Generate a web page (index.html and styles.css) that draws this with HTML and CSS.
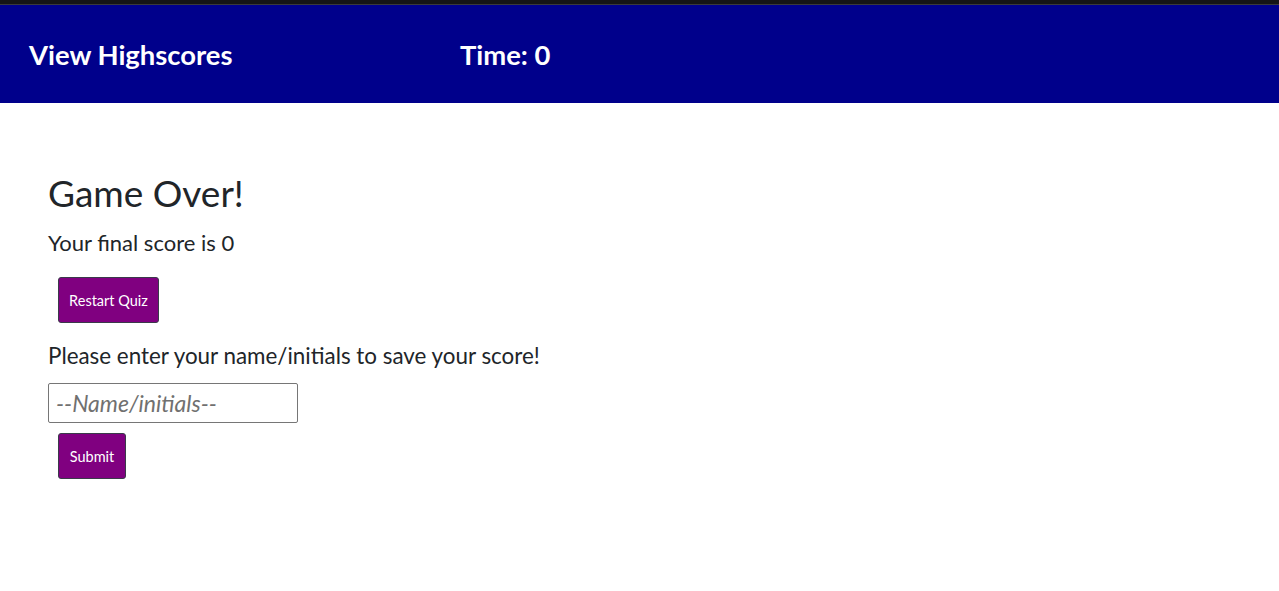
FILE: index.html
```html
<!DOCTYPE html>
<html lang="en">
<head>
<meta charset="utf-8">
<title>Quiz</title>
<link rel="stylesheet" href="styles.css">
</head>
<body>
<div class="topstrip"></div>
<header class="header">
  <a class="nav-link" href="#">View Highscores</a>
  <span class="timer">Time: 0</span>
</header>
<main class="content">
  <h1 class="title">Game Over!</h1>
  <p class="score">Your final score is 0</p>
  <button class="btn btn-restart">Restart Quiz</button>
  <p class="prompt">Please enter your name/initials to save your score!</p>
  <input class="name-input" type="text" placeholder="--Name/initials--">
  <button class="btn btn-submit">Submit</button>
</main>
</body>
</html>
```
FILE: styles.css
```css
html, body {
  margin: 0;
  padding: 0;
  background: #ffffff;
  font-family: Lato, "Open Sans", sans-serif;
  color: #212529;
}
.topstrip {
  height: 4px;
  background: #151515;
  border-bottom: 1px solid #3a3a3a;
}
.header {
  display: grid;
  grid-template-columns: 431px auto;
  align-items: center;
  height: 98px;
  padding-left: 29px;
  background: #00008b;
}
.nav-link, .timer {
  color: #ffffff;
  font-weight: 700;
  font-size: 27.4px;
  text-decoration: none;
}
.content {
  padding: 66px 48px 0;
  display: flex;
  flex-direction: column;
  align-items: flex-start;
}
.title {
  margin: 0;
  font-weight: 400;
  font-size: 37px;
  line-height: 48px;
}
.score, .prompt {
  margin: 0;
  font-size: 22px;
  line-height: 30px;
}
.score { margin-top: 11px; }
.prompt { margin-top: 18px; font-size: 22.4px; }
.btn {
  margin-left: 10px;
  background: #800080;
  color: #ffffff;
  border: 1px solid #3a3a4a;
  border-radius: 3px;
  font-family: Lato, "Open Sans", sans-serif;
  font-size: 14.5px;
  height: 46px;
  padding: 0 8px;
}
.btn-restart { margin-top: 19px; width: 101px; }
.btn-submit { margin-top: 10px; width: 68px; }
.name-input {
  margin-top: 12px;
  box-sizing: border-box;
  width: 250px;
  height: 40px;
  border: 1px solid #767676;
  border-radius: 2px;
  padding: 0 7px;
  font-family: Lato, "Open Sans", sans-serif;
  font-size: 23px;
  font-style: italic;
}
.name-input::placeholder {
  color: #707070;
  font-style: italic;
}
```
